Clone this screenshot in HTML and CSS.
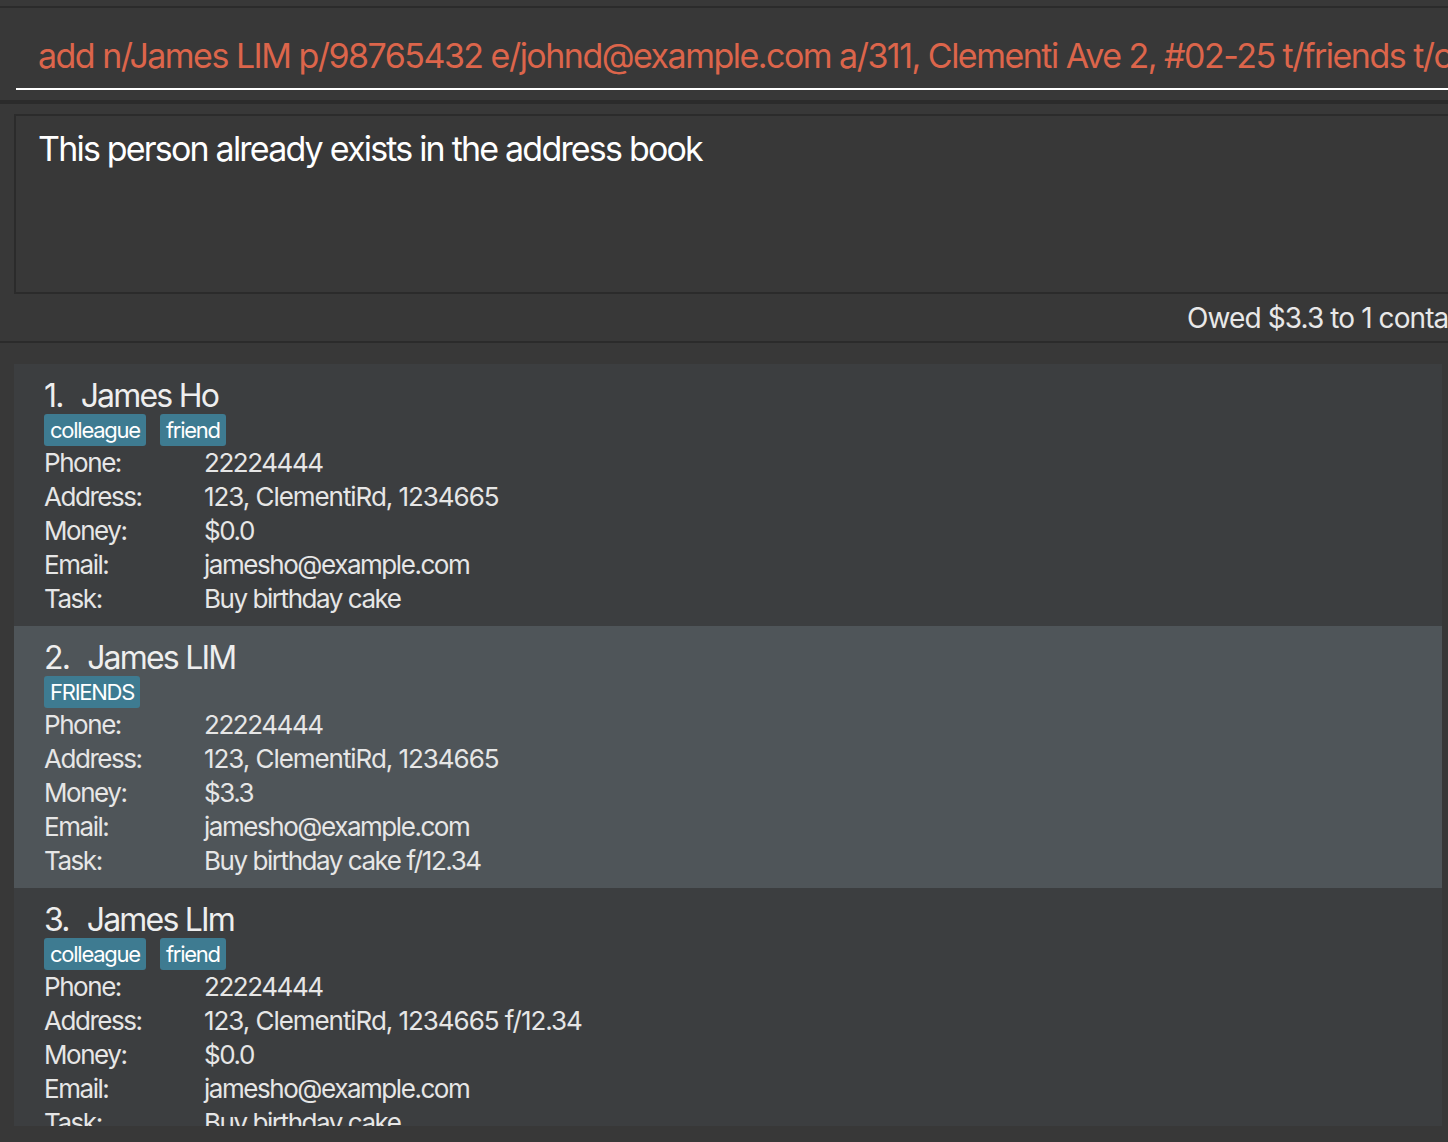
FILE: index.html
```html
<!DOCTYPE html>
<html>
<head>
<meta charset="utf-8">
<link rel="stylesheet" href="styles.css">
</head>
<body>
<div class="app">
  <div class="topbar"></div>
  <div class="cmd-wrap">
    <div class="cmd-field"><span class="cmd-text">add n/James LIM p/98765432 e/johnd@example.com a/311, Clementi Ave 2, #02-25 t/friends t/colleagues</span></div>
  </div>
  <div class="result-wrap">
    <div class="result-box">This person already exists in the address book</div>
  </div>
  <div class="status"><span class="status-text">Owed $3.3 to 1 contact</span></div>
  <div class="list">
    <div class="card">
      <div class="name"><span class="idx">1.</span>James Ho</div>
      <div class="tags"><span class="tag">colleague</span><span class="tag">friend</span></div>
      <div class="rows">
        <span>Phone:</span><span>22224444</span>
        <span>Address:</span><span class="num">123, ClementiRd, 1234665</span>
        <span>Money:</span><span>$0.0</span>
        <span>Email:</span><span>jamesho@example.com</span>
        <span>Task:</span><span>Buy birthday cake</span>
      </div>
    </div>
    <div class="card selected">
      <div class="name"><span class="idx">2.</span>James LIM</div>
      <div class="tags"><span class="tag">FRIENDS</span></div>
      <div class="rows">
        <span>Phone:</span><span>22224444</span>
        <span>Address:</span><span class="num">123, ClementiRd, 1234665</span>
        <span>Money:</span><span>$3.3</span>
        <span>Email:</span><span>jamesho@example.com</span>
        <span>Task:</span><span>Buy birthday cake f/12.34</span>
      </div>
    </div>
    <div class="card">
      <div class="name"><span class="idx">3.</span>James LIm</div>
      <div class="tags"><span class="tag">colleague</span><span class="tag">friend</span></div>
      <div class="rows">
        <span>Phone:</span><span>22224444</span>
        <span>Address:</span><span class="num">123, ClementiRd, 1234665 f/12.34</span>
        <span>Money:</span><span>$0.0</span>
        <span>Email:</span><span>jamesho@example.com</span>
        <span>Task:</span><span>Buy birthday cake</span>
      </div>
    </div>
  </div>
</div>
</body>
</html>
```

FILE: styles.css
```css
* { box-sizing: border-box; }
html, body {
  margin: 0;
  padding: 0;
  background: #383838;
  width: 1448px;
  height: 1142px;
  overflow: hidden;
}
body {
  font-family: "Inter", "Noto Sans", sans-serif;
  color: #ececec;
}
.app {
  width: 1448px;
  height: 1142px;
  overflow: hidden;
  display: flex;
  flex-direction: column;
}
.topbar {
  height: 6px;
  flex: none;
}
.cmd-wrap {
  flex: none;
  height: 94px;
  border-top: 2px solid #2b2b2b;
  padding-left: 16px;
}
.cmd-field {
  height: 82px;
  border-bottom: 2px solid #ffffff;
  padding: 28px 0 0 22px;
  white-space: nowrap;
  overflow: hidden;
}
.cmd-text {
  font-size: 34px;
  line-height: 40px;
  color: #dc654b;
  letter-spacing: -1.52px;
}
.result-wrap {
  flex: none;
  border-top: 4px solid #2b2b2b;
  padding: 10px 0 0 14px;
}
.result-box {
  height: 180px;
  border: 2px solid #2b2b2b;
  border-right: none;
  padding: 11px 22px;
  font-size: 34px;
  line-height: 44px;
  color: #ffffff;
  letter-spacing: -1.8px;
}
.status {
  flex: none;
  height: 49px;
  border-bottom: 2px solid #2b2b2b;
  display: flex;
  align-items: center;
  padding-left: 1187px;
  white-space: nowrap;
  overflow: hidden;
}
.status-text {
  font-size: 28px;
  color: #e8e8e8;
  letter-spacing: -0.9px;
}
.list {
  flex: none;
  height: 783px;
  padding: 21px 6px 0 14px;
  overflow: hidden;
}
.card {
  height: 262px;
  background: #3c3e40;
  padding: 14px 0 10px 30px;
  overflow: hidden;
}
.card.selected {
  background: #4f5559;
}
.name {
  font-size: 32px;
  line-height: 36px;
  color: #eeeeee;
  letter-spacing: -1.8px;
  white-space: nowrap;
}
.idx {
  margin-right: 18px;
}
.tags {
  display: flex;
  gap: 14px;
  height: 32px;
}
.tag {
  background: #3e7b91;
  color: #ffffff;
  font-size: 22px;
  line-height: 32px;
  padding: 0 6px;
  border-radius: 3px;
  letter-spacing: -1.25px;
}
.rows {
  display: grid;
  grid-template-columns: 160px auto;
  justify-content: start;
  font-size: 26px;
  line-height: 34px;
  color: #e6e6e6;
  letter-spacing: -1.45px;
  white-space: nowrap;
}
.rows .num {
  letter-spacing: -1.05px;
}
```
